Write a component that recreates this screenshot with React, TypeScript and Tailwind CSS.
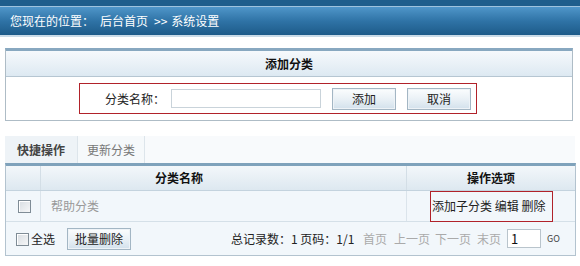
import React from 'react';

const font = 'font-["SimSun","Noto_Sans_CJK_SC",sans-serif]';

const Checkbox: React.FC = () => (
  <span className="inline-block w-[13px] h-[13px] border border-[#7f8c96] bg-gradient-to-br from-[#d8dde2] to-[#f6f7f8] shadow-[inset_1px_1px_0_#fff]" />
);

const Button: React.FC<{ label: string; className?: string }> = ({ label, className = '' }) => (
  <button
    className={`h-[22px] border border-[#a3b6c4] bg-gradient-to-b from-[#fbfdfe] via-[#eaf1f6] to-[#d3e1ec] text-[12px] text-[#222] leading-none shadow-[inset_0_0_0_1px_#eef3f7] ${className}`}
  >
    {label}
  </button>
);

const App: React.FC = () => {
  return (
    <div className={`w-[580px] h-[266px] bg-white text-[12px] text-[#333] ${font}`}>
      {/* 顶部位置栏 */}
      <div className="h-[6px] bg-[#1e5e8c]" />
      <div className="h-px bg-[#9ec3de]" />
      <div className="h-[28px] bg-gradient-to-b from-[#4f96c9] via-[#2f73a6] to-[#1d5b89] flex items-center pl-[10px] text-white text-[12px]">
        <span>您现在的位置：</span>
        <span className="ml-[6px]">后台首页</span>
        <span className="ml-[6px]">&gt;&gt;</span>
        <span className="ml-[4px]">系统设置</span>
      </div>
      <div className="h-[2px] bg-[#c9dbe8]" />

      {/* 添加分类 */}
      <div className="mt-[11px] ml-[5px] w-[568px] border border-[#aebcc6] border-t-[3px] border-t-[#88a8c0]">
        <div className="h-[26px] bg-gradient-to-b from-[#f6f9fc] to-[#dde9f2] border-b border-[#b6c6d2] flex items-center justify-center font-bold text-[#111] text-[12px]">
          添加分类
        </div>
        <div className="h-[43px] flex items-center">
          <div className="ml-[73px] w-[398px] h-[31px] border border-[#b1222a] flex items-center">
            <span className="ml-[25px] text-[#222]">分类名称：</span>
            <input
              className="ml-[6px] w-[150px] h-[19px] border border-[#c9d3da] bg-white outline-none"
              defaultValue=""
            />
            <Button label="添加" className="ml-[11px] w-[64px]" />
            <Button label="取消" className="ml-[11px] w-[64px]" />
          </div>
        </div>
      </div>

      {/* 标签 */}
      <div className="mt-[15px] ml-[5px] w-[570px] h-[27px] flex bg-[#f8fafc]">
        <div className="w-[72px] bg-[#eef3f7] flex items-center justify-center font-bold text-[#444]">快捷操作</div>
        <div className="w-[68px] border-l border-r border-[#dde5eb] bg-[#f6f9fb] flex items-center justify-center text-[#777]">更新分类</div>
      </div>

      {/* 列表 */}
      <div className="ml-[5px] w-[571px] border border-[#b3c3cf] border-t-[3px] border-t-[#7fa2bb]">
        <div className="h-[25px] flex bg-gradient-to-b from-[#f3f7fa] to-[#dde8f0] border-b border-[#c4d3de] font-bold text-[#111]">
          <div className="w-[35px] border-r border-[#d3dee6]" />
          <div className="w-[366px] border-r border-[#d3dee6] flex items-center pl-[114px]">分类名称</div>
          <div className="flex-1 flex items-center justify-center">操作选项</div>
        </div>
        <div className="h-[31px] flex bg-[#f2f7fb] border-b border-[#d5e0e8]">
          <div className="w-[35px] border-r border-[#dbe4eb] flex items-center justify-center pl-[2px]">
            <Checkbox />
          </div>
          <div className="w-[366px] border-r border-[#dbe4eb] flex items-center pl-[10px] text-[#999]">帮助分类</div>
          <div className="flex-1 flex items-center">
            <div className="ml-[23px] w-[123px] h-[31px] border border-[#b1222a] flex items-center pl-[1px] text-[#222] whitespace-nowrap">
              添加子分类&nbsp;编辑&nbsp;删除
            </div>
          </div>
        </div>
        <div className="h-[33px] flex items-center bg-[#f2f7fb] whitespace-nowrap">
          <span className="ml-[10px] mt-[1px] flex items-center">
            <Checkbox />
          </span>
          <span className="ml-[2px] text-[#222]">全选</span>
          <Button label="批量删除" className="ml-[12px] w-[64px] h-[21px] text-[#111]" />
          <span className="ml-[100px] w-[126px] text-[#222]">总记录数：1 页码：1/1</span>
          <span className="ml-[6px] w-[24px] text-[#aaa]">首页</span>
          <span className="ml-[7px] w-[36px] text-[#aaa]">上一页</span>
          <span className="ml-[5px] w-[36px] text-[#aaa]">下一页</span>
          <span className="ml-[6px] w-[24px] text-[#aaa]">末页</span>
          <input
            className="ml-[6px] w-[34px] h-[19px] border border-[#b9c4cc] bg-white pl-[3px] text-[13px] text-[#111] outline-none"
            defaultValue="1"
          />
          <span className="ml-[6px] text-[9px] text-[#444]">GO</span>
        </div>
      </div>
    </div>
  );
};

export default App;
